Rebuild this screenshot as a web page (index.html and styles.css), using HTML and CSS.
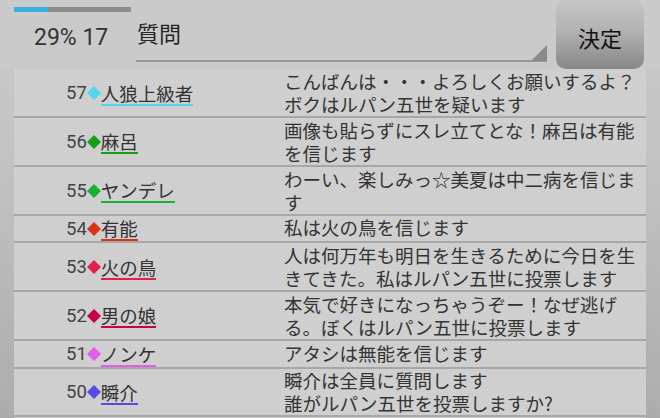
FILE: index.html
```html
<!DOCTYPE html>
<html lang="ja">
<head>
<meta charset="utf-8">
<link rel="stylesheet" href="styles.css">
</head>
<body>
<div class="screen">
  <header class="top">
    <div class="stats">
      <div class="progress"><div class="progress-fill" style="width:29%"></div></div>
      <div class="stats-text">29% 17</div>
    </div>
    <div class="field">
      <span class="field-text">質問</span>
      <svg class="field-corner" width="16" height="16" viewBox="0 0 16 16"><polygon points="16,0 16,16 0,16" fill="#8a8a8a"/></svg>
    </div>
    <div class="submit">決定</div>
  </header>
  <main class="panel">
    <div class="row">
      <div class="who"><span class="num">57</span><svg class="dia" viewBox="0 0 14 14" style="color:#52d6f0"><polygon points="7,0 14,7 7,14 0,7"/></svg><span class="name" style="border-color:#52d6f0">人狼上級者</span></div>
      <div class="msg">こんばんは・・・よろしくお願いするよ？ボクはルパン五世を疑います</div>
    </div>
    <div class="row">
      <div class="who"><span class="num">56</span><svg class="dia" viewBox="0 0 14 14" style="color:#16a016"><polygon points="7,0 14,7 7,14 0,7"/></svg><span class="name" style="border-color:#16a016">麻呂</span></div>
      <div class="msg">画像も貼らずにスレ立てとな！麻呂は有能を信じます</div>
    </div>
    <div class="row">
      <div class="who"><span class="num">55</span><svg class="dia" viewBox="0 0 14 14" style="color:#18b030"><polygon points="7,0 14,7 7,14 0,7"/></svg><span class="name" style="border-color:#18b030">ヤンデレ</span></div>
      <div class="msg">わーい、楽しみっ☆美夏は中二病を信じます</div>
    </div>
    <div class="row">
      <div class="who"><span class="num">54</span><svg class="dia" viewBox="0 0 14 14" style="color:#dc3414"><polygon points="7,0 14,7 7,14 0,7"/></svg><span class="name" style="border-color:#dc3414">有能</span></div>
      <div class="msg">私は火の鳥を信じます</div>
    </div>
    <div class="row">
      <div class="who"><span class="num">53</span><svg class="dia" viewBox="0 0 14 14" style="color:#e2204c"><polygon points="7,0 14,7 7,14 0,7"/></svg><span class="name" style="border-color:#e2204c">火の鳥</span></div>
      <div class="msg">人は何万年も明日を生きるために今日を生きてきた。私はルパン五世に投票します</div>
    </div>
    <div class="row">
      <div class="who"><span class="num">52</span><svg class="dia" viewBox="0 0 14 14" style="color:#c8004c"><polygon points="7,0 14,7 7,14 0,7"/></svg><span class="name" style="border-color:#c8004c">男の娘</span></div>
      <div class="msg">本気で好きになっちゃうぞー！なぜ逃げる。ぼくはルパン五世に投票します</div>
    </div>
    <div class="row">
      <div class="who"><span class="num">51</span><svg class="dia" viewBox="0 0 14 14" style="color:#e45ce8"><polygon points="7,0 14,7 7,14 0,7"/></svg><span class="name" style="border-color:#e45ce8">ノンケ</span></div>
      <div class="msg">アタシは無能を信じます</div>
    </div>
    <div class="row">
      <div class="who"><span class="num">50</span><svg class="dia" viewBox="0 0 14 14" style="color:#5a4ae0"><polygon points="7,0 14,7 7,14 0,7"/></svg><span class="name" style="border-color:#5a4ae0">瞬介</span></div>
      <div class="msg msg-pre">瞬介は全員に質問します
誰がルパン五世を投票しますか?</div>
    </div>
    <div class="row row-tail"></div>
  </main>
</div>
</body>
</html>
```

FILE: styles.css
```css
html, body {
  margin: 0;
  padding: 0;
}
body {
  width: 660px;
  height: 418px;
  overflow: hidden;
  background: linear-gradient(to bottom, #cbcbcb 0%, #c2c2c2 40%, #acacac 100%);
  font-family: "Noto Sans CJK JP", Roboto, sans-serif;
  color: #333;
}
.screen {
  display: flex;
  flex-direction: column;
  height: 418px;
}
.top {
  display: flex;
  height: 73px;
  padding-left: 14px;
  padding-right: 16px;
  background: #cacaca;
}
.stats {
  width: 122px;
  display: flex;
  flex-direction: column;
}
.progress {
  margin-top: 7px;
  width: 117px;
  height: 5px;
  background: #8e8e8e;
}
.progress-fill {
  height: 100%;
  background: #38b0e2;
}
.stats-text {
  margin-top: 12px;
  padding-left: 20px;
  font-family: Roboto, sans-serif;
  font-size: 23px;
  line-height: 27px;
  color: #333;
}
.field {
  width: 411px;
  height: 62px;
  border-bottom: 2px solid #979797;
  position: relative;
  box-sizing: border-box;
}
.field-text {
  display: block;
  margin-top: 18px;
  padding-left: 1px;
  font-size: 22px;
  line-height: 28px;
  color: #262626;
}
.field-corner {
  position: absolute;
  right: 0;
  bottom: -1px;
  width: 16px;
  height: 16px;
}
.submit {
  margin-left: 9px;
  width: 88px;
  height: 69px;
  border-radius: 10px;
  background: linear-gradient(to bottom, #c6c6c6 0%, #b2b2b2 45%, #868686 100%);
  display: flex;
  align-items: center;
  justify-content: center;
  font-size: 22px;
  color: #111;
  padding-top: 4px;
  box-sizing: border-box;
}
.panel {
  margin: 0 14px;
  background: #cfcfcf;
  flex: 1;
}
.row {
  display: grid;
  grid-template-columns: 270px 1fr;
  padding-top: 0.75px;
  border-bottom: 2px solid #a7a7a7;
}
.row-tail {
  border-bottom: none;
}
.who {
  display: flex;
  align-items: center;
  padding-left: 52px;
}
.num {
  font-family: Roboto, sans-serif;
  font-size: 18.5px;
  color: #444;
  line-height: 22px;
}
.dia {
  width: 14px;
  height: 14px;
  fill: currentColor;
  flex: none;
}
.name {
  font-size: 18.5px;
  line-height: 21px;
  padding-top: 2px;
  color: #333;
  border-bottom: 2px solid;
}
.msg {
  font-size: 18.5px;
  line-height: 23px;
  color: #333;
  line-break: strict;
}
.msg-pre {
  white-space: pre-line;
}
```
